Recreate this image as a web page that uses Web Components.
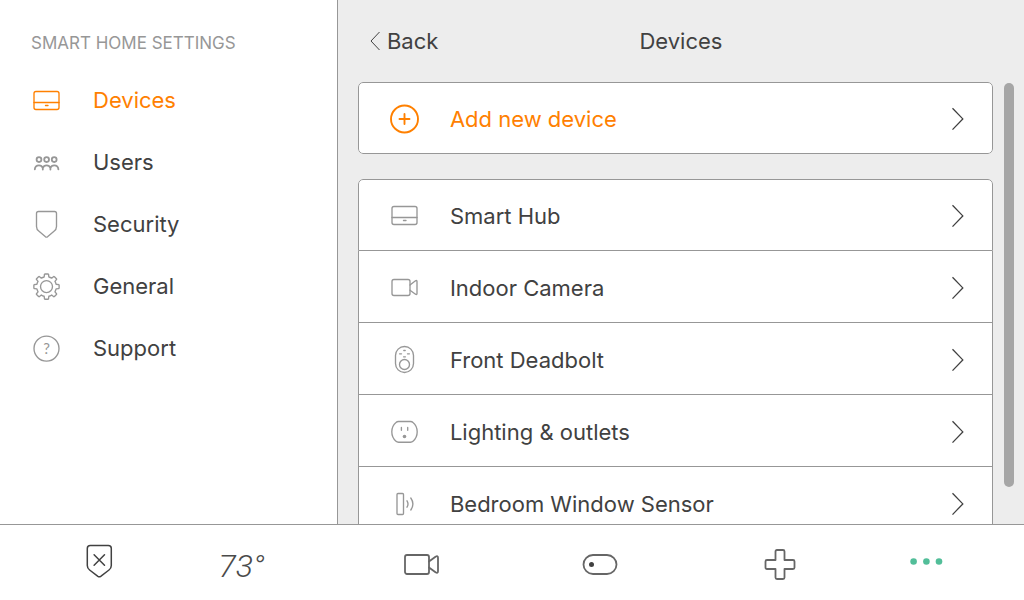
<!DOCTYPE html>
<html lang="en">
<head>
<meta charset="utf-8">
<title>Smart Home Settings</title>
<style>
  html, body { height: 100%; margin: 0; }
  body {
    --ink: #414141;
    --muted: #979797;
    --accent: #ff8000;
    --line: #979797;
    --panel: #ededed;
    color: var(--ink);
    background: #fff;
    font: 22px/28px Inter, "Liberation Sans", sans-serif;
  }
</style>
</head>
<body>
<smart-home-app>
  <settings-nav slot="nav" heading="Smart Home Settings">
    <nav-item icon="hub" href="#devices" current>Devices</nav-item>
    <nav-item icon="users" href="#users">Users</nav-item>
    <nav-item icon="shield" href="#security">Security</nav-item>
    <nav-item icon="gear" href="#general">General</nav-item>
    <nav-item icon="help" href="#support">Support</nav-item>
  </settings-nav>
  <settings-panel heading="Devices">
    <row-group>
      <device-row icon="add" href="#add" accent>Add new device</device-row>
    </row-group>
    <row-group>
      <device-row icon="hub" href="#hub">Smart Hub</device-row>
      <device-row icon="camera" href="#camera">Indoor Camera</device-row>
      <device-row icon="deadbolt" href="#deadbolt">Front Deadbolt</device-row>
      <device-row icon="outlet" href="#outlets">Lighting &amp; outlets</device-row>
      <device-row icon="sensor" href="#sensor">Bedroom Window Sensor</device-row>
    </row-group>
  </settings-panel>
  <tab-bar slot="tabs"></tab-bar>
</smart-home-app>

<script>
// Outline of an eight-toothed cog centred on (cx, cy).
function cogPath(cx, cy, root, tip) {
  const p = (r, a) => (cx + r * Math.sin(a)).toFixed(2) + ' ' + (cy - r * Math.cos(a)).toFixed(2);
  let d = '';
  for (let i = 0; i < 8; i++) {
    const a = i * Math.PI / 4;
    d += (i ? `A${root} ${root} 0 0 1 ` : 'M') + p(root, a - 0.24);
    d += 'L' + p(tip - 0.6, a - 0.17) + 'Q' + p(tip, a - 0.17) + ' ' + p(tip, a - 0.11);
    d += 'L' + p(tip, a + 0.11) + 'Q' + p(tip, a + 0.17) + ' ' + p(tip - 0.6, a + 0.17);
    d += 'L' + p(root, a + 0.24);
  }
  return d + `A${root} ${root} 0 0 1 ` + p(root, -0.24) + 'Z';
}

const ICONS = {
  hub: '<rect x="2" y="5.5" width="25" height="18" rx="2"/><path d="M2 16.500h25M13.500 19.500h2.500"/>',
  users: '<g stroke-width="1.8"><circle cx="7" cy="11.6" r="2.4"/><circle cx="14.6" cy="11.6" r="2.4"/><circle cx="22.2" cy="11.6" r="2.4"/><path d="M2.800 21.400c.2-2.600 1.800-4.100 4.200-4.100 1.900 0 3.200 1 3.800 2.600.6-1.600 1.900-2.600 3.800-2.600s3.200 1 3.800 2.600c.6-1.600 1.900-2.600 3.800-2.600 2.400 0 4 1.500 4.200 4.100M10.800 19.500v2M18.400 19.500v2"/></g>',
  shield: '<path d="M6.500 1.500h16q2 0 2 2v13q0 3-2.500 4.800L15.500 26.800q-1 .6-2 0L7 21.300q-2.500-1.800-2.500-4.800v-13q0-2 2-2z"/>',
  gear: `<path d="${cogPath(14.5, 14.6, 9.9, 12.7)}"/><circle cx="14.5" cy="14.6" r="6"/>`,
  help: '<circle cx="14.500" cy="14.600" r="12.500"/><text x="14.500" y="19.500" text-anchor="middle" font-family="Lato, sans-serif" font-size="15" fill="currentColor" stroke="none">?</text>',
  add: '<g stroke-width="1.900"><circle cx="14.500" cy="15" r="13.500"/><path d="M14.500 10v10M9.500 15h10"/></g>',
  camera: '<rect x="2" y="6.500" width="18" height="16" rx="2"/><path d="M20 12l5.500-4.200q1.500-.8 1.500.8v11.800q0 1.600-1.500.8L20 17.200"/>',
  deadbolt: '<rect x="5.500" y="1.500" width="18" height="26" rx="9"/><circle cx="14.500" cy="19.500" r="5"/><path d="M9.600 8.800h1.900M17.500 8.800h1.900M13.800 5.500h1.400M13.600 11.800h1.800"/>',
  outlet: '<path d="M8.500 4.500h12q1.500 0 2.500.9c2.800 2.300 4.200 5.500 4.200 9.400s-1.400 7.100-4.200 9.500q-1 .9-2.500.9h-12q-1.500 0-2.500-.9c-2.800-2.400-4.200-5.600-4.200-9.500s1.400-7.100 4.200-9.400q1-.9 2.500-.9zM11.400 10.500v2.800M17.700 10.500v2.800"/><circle cx="14.500" cy="19.500" r="1.800" fill="currentColor" stroke="none"/>',
  sensor: '<rect x="7" y="4.500" width="6.500" height="21" rx="1"/><path d="M17 11.800q2 3.200 0 6.400M20.800 9q4.200 6 0 12"/>'
};

const TAB_ICONS = {
  armed: '<path transform="translate(.8 0)" d="M10.500 2.500h18q3 0 3 3v17q0 2.800-2.300 4.500l-8.300 6.300q-1.400.9-2.800 0L9.800 27q-2.300-1.700-2.300-4.500v-17q0-3 3-3zM14.300 11.800l10.400 10.400M24.700 11.800L14.300 22.200" stroke="#414141" stroke-width="1.500"/>',
  camera: '<rect x="4" y="12" width="24" height="19" rx="2"/><path d="M28 18.500l6.500-4.700q2.500-1.600 2.500 1v13.400q0 2.600-2.500 1L28 24.500"/>',
  toggle: '<rect x="3.500" y="12" width="33" height="19" rx="9.500"/><circle cx="11.500" cy="21.500" r="2.500" fill="#414141" stroke="none"/>',
  plus: '<path transform="translate(1 0)" d="M17 7h6q1.500 0 1.500 1.500v8.500h8.500q1.500 0 1.500 1.500v6q0 1.500-1.500 1.500h-8.500v8.500q0 1.500-1.500 1.500h-6q-1.500 0-1.500-1.500v-8.500h-8.500q-1.500 0-1.500-1.500v-6q0-1.500 1.500-1.500h8.500v-8.500q0-1.500 1.500-1.500z"/>',
  more: '<g fill="#52be99" stroke="none"><circle cx="7.600" cy="18.500" r="3.300"/><circle cx="20.400" cy="18.500" r="3.300"/><circle cx="33" cy="18.500" r="3.300"/></g>'
};

const iconSvg = name =>
  `<svg class="icon" viewBox="0 0 28 28" aria-hidden="true">${ICONS[name]}</svg>`;

const ICON_CSS = `
  .icon { flex: none; width: 28px; height: 28px; overflow: visible; fill: none;
          stroke: currentColor; stroke-width: 1.35; stroke-linecap: round; stroke-linejoin: round; }`;

function define(name, render, ready) {
  customElements.define(name, class extends HTMLElement {
    connectedCallback() {
      if (this.shadowRoot) return;
      this.attachShadow({ mode: 'open' }).innerHTML = render(this);
      if (ready) ready(this, this.shadowRoot);
    }
  });
}

define('smart-home-app', () => `
  <style>
    :host { display: grid; grid-template: minmax(0, 1fr) auto / 33% minmax(0, 1fr); height: 100vh; }
    ::slotted([slot="tabs"]) { grid-column: 1 / -1; }
  </style>
  <slot name="nav"></slot><slot></slot><slot name="tabs"></slot>`);

define('settings-nav', el => `
  <style>
    :host { display: block; overflow: auto; border-right: 1px solid var(--line); }
    h2 { margin: 29px 0 13px 31px; color: var(--muted); font-size: 17px; line-height: 28px;
         font-weight: 400; text-transform: uppercase; white-space: nowrap; }
  </style>
  <h2>${el.getAttribute('heading')}</h2>
  <nav><slot></slot></nav>`);

define('nav-item', el => `
  <style>
    :host { display: block; }
    a { display: flex; gap: 33px; padding: 16px 32px 18px; color: var(--ink); text-decoration: none; }
    :host([current]) a { color: var(--accent); }
    :host(:not([current])) .icon { color: var(--muted); }
    ${ICON_CSS}
  </style>
  <a href="${el.getAttribute('href')}" ${el.hasAttribute('current') ? 'aria-current="page"' : ''}>${iconSvg(el.getAttribute('icon'))}<slot></slot></a>`);

define('settings-panel', el => `
  <style>
    :host { display: flex; flex-direction: column; min-height: 0; background: var(--panel); }
    header { display: grid; grid-template-columns: 1fr auto 1fr; align-items: center;
             height: 82px; padding: 0 32px; }
    h1 { margin: 0; font-size: 22px; font-weight: 400; }
    button { justify-self: start; display: flex; align-items: center; gap: 7px; padding: 0;
             border: 0; background: none; color: inherit; font: inherit; cursor: pointer; }
    button svg { width: 10px; height: 20px; fill: none; stroke: currentColor; stroke-width: 1; }
    .body { flex: 1; display: flex; min-height: 0; }
    .scroll { flex: 1; overflow-y: auto; scrollbar-width: none; padding-left: 20px; }
    .list { display: grid; gap: 25px; padding-bottom: 26px; }
    .track { width: 10px; margin: 1px 10px 0 11px; }
    .thumb { border-radius: 5px; background: #a6a6a6; }
  </style>
  <header>
    <button type="button"><svg viewBox="0 0 10 20" aria-hidden="true"><path d="M9.500 1L1 10l8.500 9"/></svg>Back</button>
    <h1>${el.getAttribute('heading')}</h1>
  </header>
  <div class="body">
    <div class="scroll"><div class="list"><slot></slot></div></div>
    <div class="track"><div class="thumb"></div></div>
  </div>`,
  (el, root) => {
    const scroll = root.querySelector('.scroll');
    const thumb = root.querySelector('.thumb');
    const update = () => {
      const ratio = scroll.clientHeight / scroll.scrollHeight;
      thumb.hidden = ratio >= 1;
      thumb.style.height = Math.round(scroll.clientHeight * ratio) + 'px';
      thumb.style.marginTop = Math.round(scroll.scrollTop * ratio) + 'px';
    };
    scroll.addEventListener('scroll', update);
    const watcher = new ResizeObserver(update);
    watcher.observe(scroll);
    watcher.observe(root.querySelector('.list'));
  });

define('row-group', () => `
  <style>
    :host { display: block; overflow: hidden; border-radius: 5px; }
    ::slotted(:first-child) { --top: 1px; --radius-top: 5px; }
    ::slotted(:last-child) { --radius-bottom: 5px; }
  </style>
  <slot></slot>`);

define('device-row', el => `
  <style>
    :host { display: block; }
    a { box-sizing: border-box; display: flex; gap: 32px; min-height: 72px;
        padding: calc(23px - var(--top, 0px)) 28px 20px 31px;
        border: solid var(--line); border-width: var(--top, 0) 1px 1px;
        border-radius: var(--radius-top, 0) var(--radius-top, 0) var(--radius-bottom, 0) var(--radius-bottom, 0);
        background: #fff; color: var(--ink); text-decoration: none; }
    :host([accent]) a { color: var(--accent); }
    :host(:not([accent])) .icon { color: var(--muted); }
    .label { flex: 1; }
    .chevron { flex: none; width: 12px; height: 28px; fill: none; stroke: #414141; stroke-width: 1.3; }
    ${ICON_CSS}
    .icon { margin-top: -1px; }
  </style>
  <a href="${el.getAttribute('href')}">${iconSvg(el.getAttribute('icon'))}<span class="label"><slot></slot></span><svg class="chevron" viewBox="0 0 12 28" aria-hidden="true"><path d="M.5 3.200L10.800 13.900.5 24.600"/></svg></a>`);

const tab = (name, label) =>
  `<button type="button" aria-label="${label}"><svg viewBox="0 0 40 40" aria-hidden="true">${TAB_ICONS[name]}</svg></button>`;

define('tab-bar', () => `
  <style>
    :host { display: block; border-top: 1px solid var(--line); background: #fff; }
    nav { display: grid; grid-template-columns: 107fr 179fr 179fr 179fr 179fr 115fr; padding: 0 41px 0 45px; }
    button { display: flex; justify-content: center; padding: 18px 0 17px; border: 0; background: none;
             color: #666; cursor: pointer; }
    .temp { padding: 21px 0 14px; color: #4a4a4a; font: italic 300 32px/40px Roboto, sans-serif; }
    svg { width: 40px; height: 40px; fill: none; stroke: currentColor; stroke-width: 1.8;
          stroke-linecap: round; stroke-linejoin: round; }
  </style>
  <nav>
    ${tab('armed', 'Alarm')}
    <button type="button" class="temp">73°</button>
    ${tab('camera', 'Cameras')}
    ${tab('toggle', 'Switches')}
    ${tab('plus', 'Emergency')}
    ${tab('more', 'More')}
  </nav>`);
</script>
</body>
</html>
